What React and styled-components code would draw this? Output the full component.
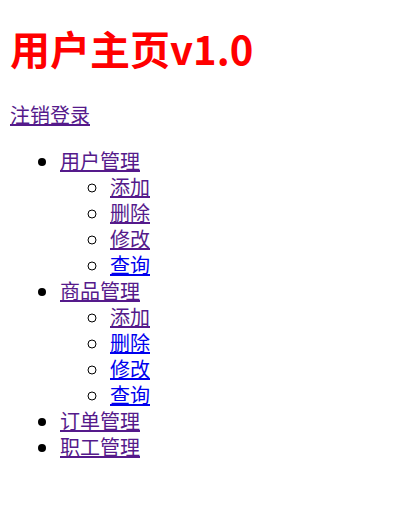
import React from 'react'
import styled, { createGlobalStyle } from 'styled-components'

const GlobalStyle = createGlobalStyle`
    body {
        margin: 0;
        padding: 10px;
        font-family: "Noto Sans CJK SC", "Microsoft YaHei", sans-serif;
        font-size: 20px;
        line-height: 26px;
        color: #000;
        background: #fff;
    }
`;

const Title = styled.h1`
    font-size: 40px;
    line-height: 52.8px;
    font-weight: 700;
    color: #ff0000;
    margin: 12.4px 0px 26.8px;
`;

const Link = styled.a`
    color: ${props => props.visited ? '#551a8b' : '#0000ee'};
    text-decoration: underline;
    cursor: pointer;
`;

const Menu = styled.ul`
    list-style-type: ${props => props.nested ? 'circle' : 'disc'};
    margin: ${props => props.nested ? '0px' : '20px 0px'};
    padding-left: 50px;
`;

const Item = styled.li`
    line-height: 26px;
`;

const actions = ['添加', '删除', '修改', '查询'];

const groups = [
    { name: '用户管理', subs: [true, true, true, false] },
    { name: '商品管理', subs: [true, false, false, false] },
    { name: '订单管理' },
    { name: '职工管理' },
];

const App = () => {
    return (
        <>
            <GlobalStyle />
            <Title>用户主页v1.0</Title>
            <Link visited>注销登录</Link>
            <Menu>
                {groups.map(g => (
                    <Item key={g.name}>
                        <Link visited>{g.name}</Link>
                        {g.subs && (
                            <Menu nested>
                                {actions.map((a, i) => (
                                    <Item key={a}>
                                        <Link visited={g.subs[i]}>{a}</Link>
                                    </Item>
                                ))}
                            </Menu>
                        )}
                    </Item>
                ))}
            </Menu>
        </>
    )
}

export default App
